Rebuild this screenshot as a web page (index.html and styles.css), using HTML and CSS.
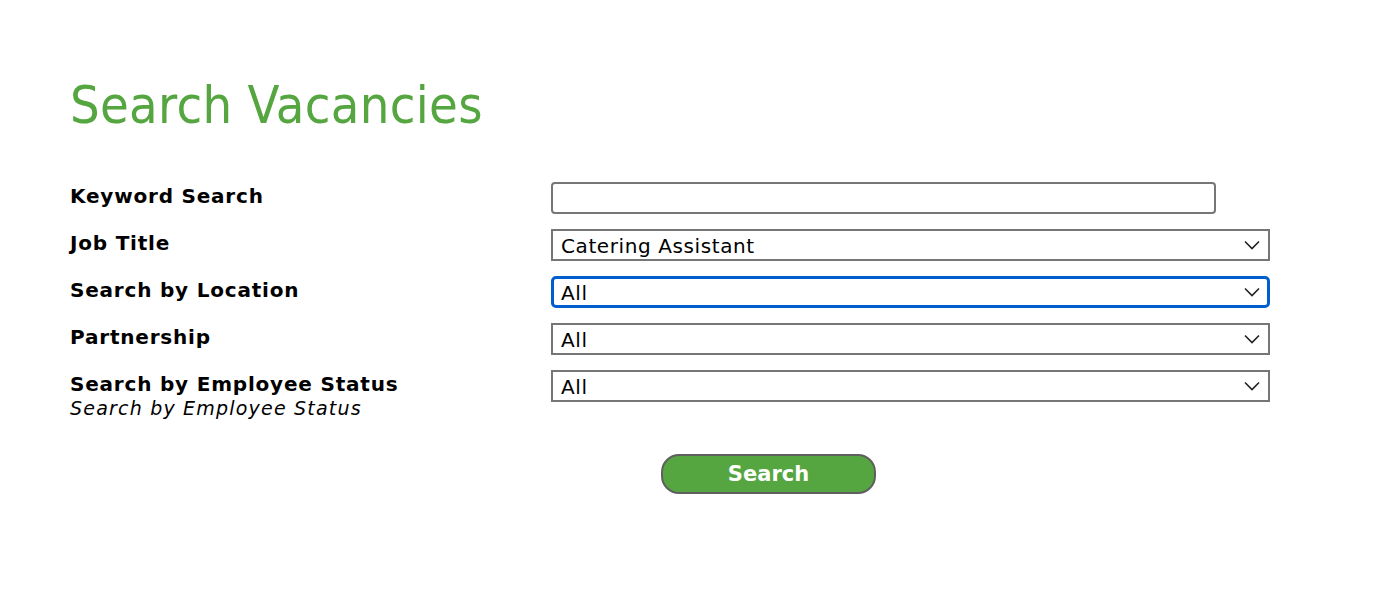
FILE: index.html
```html
<!DOCTYPE html>
<html>
<head>
<meta charset="utf-8">
<link rel="stylesheet" href="styles.css">
</head>
<body>
<div class="page">
  <h1 class="title">Search Vacancies</h1>
  <form class="form">
    <div class="row">
      <div class="label"><b>Keyword Search</b></div>
      <div class="field"><input class="text" type="text"></div>
    </div>
    <div class="row">
      <div class="label"><b>Job Title</b></div>
      <div class="field"><div class="select"><span>Catering Assistant</span><svg class="chev" viewBox="0 0 16 10" width="16" height="10"><path d="M1 1.5 L8 8.5 L15 1.5" fill="none" stroke="#222" stroke-width="1.6"/></svg></div></div>
    </div>
    <div class="row">
      <div class="label"><b>Search by Location</b></div>
      <div class="field"><div class="select focus"><span>All</span><svg class="chev" viewBox="0 0 16 10" width="16" height="10"><path d="M1 1.5 L8 8.5 L15 1.5" fill="none" stroke="#222" stroke-width="1.6"/></svg></div></div>
    </div>
    <div class="row">
      <div class="label"><b>Partnership</b></div>
      <div class="field"><div class="select"><span>All</span><svg class="chev" viewBox="0 0 16 10" width="16" height="10"><path d="M1 1.5 L8 8.5 L15 1.5" fill="none" stroke="#222" stroke-width="1.6"/></svg></div></div>
    </div>
    <div class="row">
      <div class="label"><b>Search by Employee Status</b><i class="hint">Search by Employee Status</i></div>
      <div class="field"><div class="select"><span>All</span><svg class="chev" viewBox="0 0 16 10" width="16" height="10"><path d="M1 1.5 L8 8.5 L15 1.5" fill="none" stroke="#222" stroke-width="1.6"/></svg></div></div>
    </div>
    <div class="actions">
      <button type="button" class="btn">Search</button>
    </div>
  </form>
</div>
</body>
</html>
```
FILE: styles.css
```css
html, body { margin: 0; padding: 0; background: #fff; }
body { font-family: "DejaVu Sans", Verdana, sans-serif; color: #000; }
.page { padding: 74px 0 0 70px; }
.title {
  margin: 0;
  font-family: "DejaVu Sans Condensed", "DejaVu Sans", sans-serif;
  font-weight: normal;
  font-size: 52px;
  letter-spacing: 0.3px;
  line-height: 62px;
  color: #55a640;
}
.form { margin-top: 46px; width: 1200px; }
.row { display: flex; min-height: 47px; }
.label { width: 481px; font-size: 20px; line-height: 24px; padding-top: 2px; letter-spacing: 0.8px; }
.label b { display: block; }
.hint { display: block; font-size: 19px; line-height: 25px; letter-spacing: 1.2px; }
.field { flex: 1; }
.text {
  display: block;
  box-sizing: border-box;
  width: 665px; height: 32px;
  margin: 0;
  border: 2px solid #767676;
  border-radius: 4px;
  background: #fff;
  padding: 0 6px;
}
.select {
  box-sizing: border-box;
  width: 719px; height: 32px;
  border: 2px solid #767676;
  display: flex; align-items: center; justify-content: space-between;
  padding: 2px 8px 0 8px;
  font-size: 20px;
  letter-spacing: 0.6px;
}
.select.focus { border: 3px solid #005fcc; border-radius: 5px; padding-left: 7px; padding-right: 7px; }
.chev { display: block; margin-top: -2px; }
.actions { padding: 33px 0 0 591px; }
.btn {
  box-sizing: border-box;
  width: 215px; height: 40px;
  border: 2px solid #5f5f5f;
  border-radius: 18px;
  background: #55a640;
  color: #fff;
  font-family: "DejaVu Sans", Verdana, sans-serif;
  font-weight: bold;
  font-size: 21px;
  padding: 0;
}
```
